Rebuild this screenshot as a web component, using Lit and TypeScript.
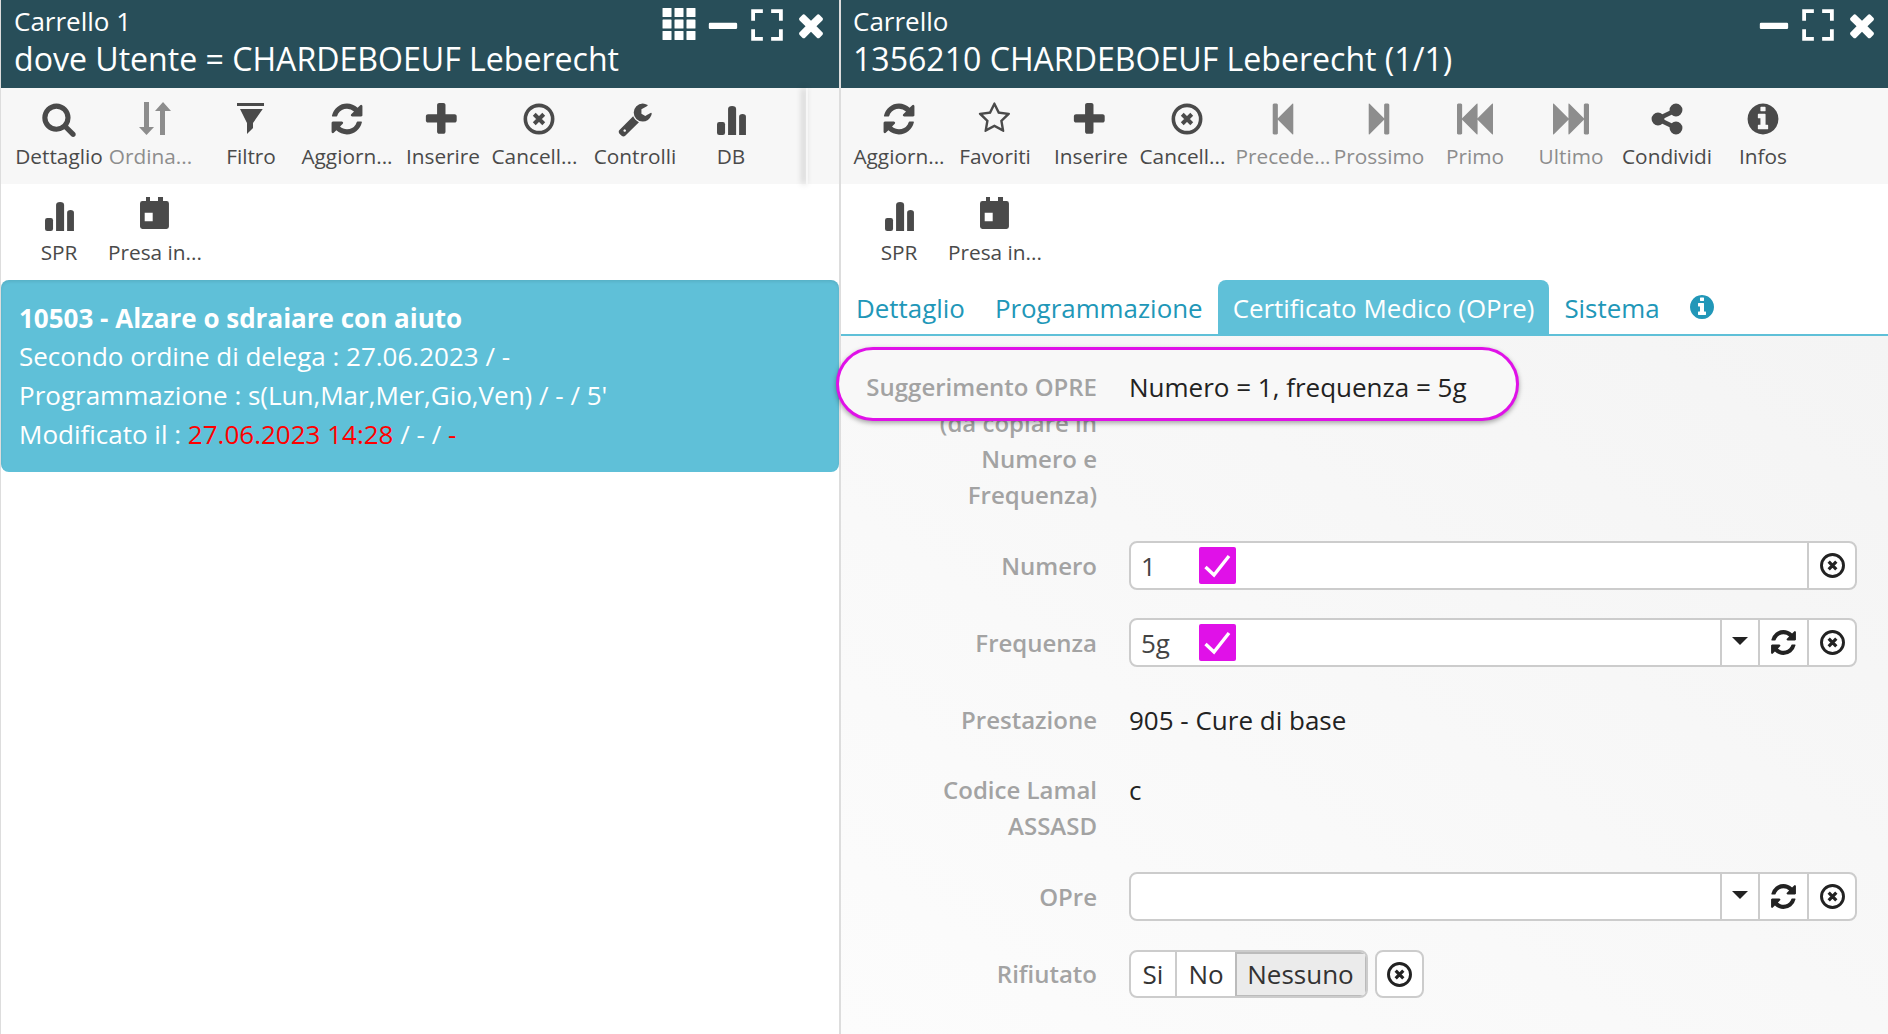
import { LitElement, html, css, svg } from "lit";
import { customElement } from "lit/decorators.js";

const P: Record<string, any> = {
  search: svg`<path d="M1216 832q0-185-131.5-316.5t-316.5-131.5-316.5 131.5-131.5 316.5 131.5 316.5 316.5 131.5 316.5-131.5 131.5-316.5zm512 832q0 52-38 90t-90 38q-54 0-90-38l-343-342q-179 124-399 124-143 0-273.5-55.5t-225-150-150-225-55.5-273.5 55.5-273.5 150-225 225-150 273.5-55.5 273.5 55.5 225 150 150 225 55.5 273.5q0 220-124 399l343 343q37 37 37 90z"/>`,
  refresh: svg`<path d="M1639 1056q0 5-1 7-64 268-268 434.5t-478 166.5q-146 0-282.5-55t-243.5-157l-129 129q-19 19-45 19t-45-19-19-45v-448q0-26 19-45t45-19h448q26 0 45 19t19 45-19 45l-137 137q71 66 161 102t187 36q134 0 250-65t186-179q11-17 53-117 8-23 30-23h192q13 0 22.5 9.5t9.5 22.5zm25-800v448q0 26-19 45t-45 19h-448q-26 0-45-19t-19-45 19-45l138-138q-148-137-349-137-134 0-250 65t-186 179q-11 17-53 117-8 23-30 23h-199q-13 0-22.5-9.5t-9.5-22.5v-7q65-268 270-434.5t480-166.5q146 0 284 55.5t245 156.5l130-129q19-19 45-19t45 19 19 45z"/>`,
  plus: svg`<g transform="translate(-166 -40) scale(1.09)"><path d="M1600 736v192q0 40-28 68t-68 28h-416v416q0 40-28 68t-68 28h-192q-40 0-68-28t-28-68v-416h-416q-40 0-68-28t-28-68v-192q0-40 28-68t68-28h416v-416q0-40 28-68t68-28h192q40 0 68 28t28 68v416h416q40 0 68 28t28 68z"/></g>`,
  times: svg`<path d="M1490 1322q0 40-28 68l-136 136q-28 28-68 28t-68-28l-294-294-294 294q-28 28-68 28t-68-28l-136-136q-28-28-28-68t28-68l294-294-294-294q-28-28-28-68t28-68l136-136q28-28 68-28t68 28l294 294 294-294q28-28 68-28t68 28l136 136q28 28 28 68t-28 68l-294 294 294 294q28 28 28 68z"/>`,
  minus: svg`<rect x="190" y="790" width="1410" height="300" rx="60"/>`,
  circleX: svg`<circle cx="896" cy="896" r="680" fill="none" stroke="currentColor" stroke-width="180"/><path d="M660 660L1132 1132M1132 660L660 1132" fill="none" stroke="currentColor" stroke-width="200"/>`,
  info: svg`<path d="M1152 1376v-160q0-14-9-23t-23-9h-96v-512q0-14-9-23t-23-9h-320q-14 0-23 9t-9 23v160q0 14 9 23t23 9h96v320h-96q-14 0-23 9t-9 23v160q0 14 9 23t23 9h448q14 0 23-9t9-23zm-128-896v-160q0-14-9-23t-23-9h-192q-14 0-23 9t-9 23v160q0 14 9 23t23 9h192q14 0 23-9t9-23zm640 416q0 209-103 385.5t-279.5 279.5-385.5 103-385.5-103-279.5-279.5-103-385.5 103-385.5 279.5-279.5 385.5-103 385.5 103 279.5 279.5 103 385.5z"/>`,
  wrench: svg`<path d="M448 1472q0-26-19-45t-45-19-45 19-19 45 19 45 45 19 45-19 19-45zm644-420l-682 682q-37 37-90 37-52 0-91-37l-106-108q-38-36-38-90 0-53 38-91l681-681q39 98 114.5 173.5t173.5 114.5zm634-435q0 39-23 106-47 134-164.5 217.5t-258.5 83.5q-185 0-316.5-131.5t-131.5-316.5 131.5-316.5 316.5-131.5q58 0 121.5 16.5t107.5 46.5q16 11 16 28t-16 28l-293 169v224l193 107q5-3 79-48.5t135.5-81 70.5-35.5q15 0 23.5 10t8.5 25z"/>`,
  share: svg`<path d="M1344 1024q133 0 226.5 93.5t93.5 226.5-93.5 226.5-226.5 93.5-226.5-93.5-93.5-226.5q0-12 2-34l-360-180q-92 86-218 86-133 0-226.5-93.5t-93.5-226.5 93.5-226.5 226.5-93.5q126 0 218 86l360-180q-2-22-2-34 0-133 93.5-226.5t226.5-93.5 226.5 93.5 93.5 226.5-93.5 226.5-226.5 93.5q-126 0-218-86l-360 180q2 22 2 34t-2 34l360 180q92-86 218-86z"/>`,
  stepB: svg`<path d="M1363 141q19-19 32-13t13 32v1472q0 26-13 32t-32-13l-710-710q-9-9-13-19v678q0 26-19 45t-45 19h-128q-26 0-45-19t-19-45v-1408q0-26 19-45t45-19h128q26 0 45 19t19 45v678q4-10 13-19z"/>`,
  stepF: svg`<path d="M429 1651q-19 19-32 13t-13-32v-1472q0-26 13-32t32 13l710 710q9 9 13 19v-678q0-26 19-45t45-19h128q26 0 45 19t19 45v1408q0 26-19 45t-45 19h-128q-26 0-45-19t-19-45v-678q-4 10-13 19z"/>`,
  fastB: svg`<path d="M1747 141q19-19 32-13t13 32v1472q0 26-13 32t-32-13l-710-710q-9-9-13-19v710q0 26-13 32t-32-13l-710-710q-9-9-13-19v678q0 26-19 45t-45 19h-128q-26 0-45-19t-19-45v-1408q0-26 19-45t45-19h128q26 0 45 19t19 45v678q4-10 13-19l710-710q19-19 32-13t13 32v710q4-10 13-19z"/>`,
  fastF: svg`<path d="M45 1651q-19 19-32 13t-13-32v-1472q0-26 13-32t32 13l710 710q9 9 13 19v-710q0-26 13-32t32 13l710 710q9 9 13 19v-678q0-26 19-45t45-19h128q26 0 45 19t19 45v1408q0 26-19 45t-45 19h-128q-26 0-45-19t-19-45v-678q-4 10-13 19l-710 710q-19 19-32 13t-13-32v-710q-4 10-13 19z"/>`,
  star: svg`<g transform="translate(30 30) scale(.933)"><path d="M1201 1004l306-297-422-62-189-382-189 382-422 62 306 297-73 421 378-199 377 199zm527-357q0 22-26 48l-363 354 86 500q1 7 1 20 0 50-41 50-19 0-40-12l-449-236-449 236q-22 12-40 12-21 0-31.5-14.5t-10.5-35.5q0-6 2-20l86-500-364-354q-25-27-25-48 0-37 56-46l502-73 225-455q19-41 49-41t49 41l225 455 502 73q56 9 56 46z"/></g>`,
  bars: svg`<rect x="200" y="1045" width="400" height="645" rx="110"/><path d="M750 1690V400q0-150 200-150t200 150V1690z"/><path d="M1300 1690V790q0-140 170-140t170 140V1690z"/>`,
  calendar: svg`<path d="M448 0h199v260h-199zM1045 0h250v260h-250z"/><path fill-rule="evenodd" d="M270 200h1200q120 0 120 120v1150q0 120-120 120h-1200q-120 0-120-120v-1150q0-120 120-120zM383 782v428h399v-428z"/>`,
  filter: svg`<path d="M199 100h1345v149h-1345zM349 398h1130l-483 698v249l-299 298v-547z"/>`,
  sort: svg`<path d="M349 50h249v1245h249l-374 398-373-398h249zM1145 1693v-1195h-249l399-448 398 448h-299v1195z"/>`,
  th: svg`<rect x="76" y="50" width="448" height="448" rx="30"/><rect x="672" y="50" width="448" height="448" rx="30"/><rect x="1268" y="50" width="448" height="448" rx="30"/><rect x="76" y="622" width="448" height="448" rx="30"/><rect x="672" y="622" width="448" height="448" rx="30"/><rect x="1268" y="622" width="448" height="448" rx="30"/><rect x="76" y="1195" width="448" height="448" rx="30"/><rect x="672" y="1195" width="448" height="448" rx="30"/><rect x="1268" y="1195" width="448" height="448" rx="30"/>`,
  expand: svg`<path d="M110 110h580v190h-390v390h-190zM1102 110h580v580h-190v-390h-390zM110 1102h190v390h390v190h-580zM1492 1102h190v580h-580v-190h390z"/>`,
};

const icon = (n: string) => html`<svg class="ic" viewBox="0 0 1792 1792" fill="currentColor">${P[n]}</svg>`;

type Tool = [string, string, boolean?, boolean?];
const tool = ([ic, label, off, sh]: Tool) => html`
  <div class="tool ${off ? "off" : ""}">${icon(ic)}<span class="${sh ? "sh" : ""}">${label}</span></div>`;

const leftTools: Tool[] = [["search", "Dettaglio"], ["sort", "Ordina...", true, true], ["filter", "Filtro"], ["refresh", "Aggiorn..."], ["plus", "Inserire"], ["circleX", "Cancell...", false, true], ["wrench", "Controlli"], ["bars", "DB"]];
const rightTools: Tool[] = [["refresh", "Aggiorn..."], ["star", "Favoriti"], ["plus", "Inserire"], ["circleX", "Cancell...", false, true], ["stepB", "Precede...", true], ["stepF", "Prossimo", true], ["fastB", "Primo", true], ["fastF", "Ultimo", true], ["share", "Condividi"], ["info", "Infos"]];
const extraTools: Tool[] = [["bars", "SPR"], ["calendar", "Presa in..."]];

const check = html`<span class="check"><svg viewBox="0 0 37 37"><path d="M6.5 20L15 28L30 9" fill="none" stroke="#fff" stroke-width="3.4" stroke-linejoin="miter"/></svg></span>`;

@customElement("app-root")
export class AppRoot extends LitElement {
  static styles = css`
    :host { display: flex; width: 1888px; height: 1034px; overflow: hidden; background: #fff; font-family: "Open Sans", sans-serif; color: #222; }
    * { box-sizing: border-box; }
    .left { width: 839px; flex: none; border-left: 1px solid #ddd; background: #fff; }
    .right { flex: 1; border-left: 2px solid #ddd; position: relative; z-index: 1; display: flex; flex-direction: column; }
    .head { height: 88px; background: #284e59; color: #fff; padding: 4px 0 0 13px; display: flex; justify-content: space-between; }
    .right .head { padding-left: 12px; }
    .t1 { font-size: 26px; line-height: 35px; }
    .t2 { font-size: 32.1px; line-height: 40px; }
    .wins { display: flex; align-items: flex-start; padding-right: 10px; padding-top: 3px; gap: 8px; }
    .right .wins { padding-right: 8px; }
    .wins svg { width: 36px; height: 36px; display: block; }
    .bar { display: flex; height: 96px; padding-left: 10px; background: #f7f7f7; }
    .bar.main { position: relative; }
    .left .bar.main::after { content: ""; position: absolute; left: 805px; top: 0; bottom: 0; width: 2px; box-shadow: -3px 0 6px rgba(0,0,0,.35); }
    .bar.sub { background: #fff; }
    .tool { width: 96px; flex: none; display: flex; flex-direction: column; align-items: center; padding-top: 13px; color: #4a4a4a; font-size: 20.8px; line-height: 28px; white-space: nowrap; }
    .tool .ic { width: 36px; height: 36px; display: block; margin-bottom: 5px; }
    .tool .sh { margin-right: 9px; }
    .tool.off { color: #8d8d8d; }
    .card { height: 192px; background: #5fc0d8; border-radius: 8px; padding: 19px 18px; color: #fff; font-size: 26px; line-height: 39px; box-shadow: inset 0 2px 3px rgba(0,0,0,.08); }
    .card b { font-weight: 700; display: block; margin-bottom: -1px; }
    .red { color: #f00; }
    .tabs { height: 56px; display: flex; align-items: stretch; border-bottom: 2px solid #5fc0d8; background: #fff; font-size: 25.9px; color: #2197b8; flex: none; }
    .tab { padding: 2px 15px 0; display: flex; align-items: center; }
    .tab.on { background: #5fc0d8; color: #fff; border-radius: 8px 8px 0 0; }
    .tab .ic { width: 28px; height: 28px; display: block; margin: -3px 0 0 -2px; }
    .form { flex: 1; background: linear-gradient(to top right, #fcfcfc, #f4f4f4); padding: 33px 31px 0 10px; display: flex; flex-direction: column; gap: 28px; position: relative; font-size: 24px; line-height: 36px; }
    .row { display: grid; grid-template-columns: 246px 1fr; column-gap: 32px; align-items: center; }
    .row.static { align-items: start; }
    .row.pad { padding: 7px 0 6px; }
    .row.tight { margin-bottom: 1px; }
    .lab { text-align: right; color: #a3a3a3; font-weight: 600; font-size: 24px; }
    .val { font-size: 26px; color: #222; }
    .callout { position: absolute; left: -5px; top: 11px; width: 683px; height: 74px; border: 3px solid #e011e8; border-radius: 37px; background: #f8f8f8; box-shadow: 0 2px 5px rgba(0,0,0,.35); display: grid; grid-template-columns: 258px 1fr; column-gap: 32px; align-items: center; padding-top: 6px; z-index: 2; }
    .input { height: 49px; border: 2px solid #ccc; border-radius: 8px; background: #fff; display: flex; align-items: stretch; font-size: 26px; color: #444; }
    .input .text { flex: 1; display: flex; align-items: center; padding-left: 10px; }
    .input .v { width: 58px; }
    .check { width: 37px; height: 37px; background: #e011e8; border-radius: 2px; display: block; }
    .check svg { display: block; width: 37px; height: 37px; }
    .btn { border-left: 2px solid #ccc; display: flex; align-items: center; justify-content: center; color: #222; width: 48px; }
    .btn.mid { width: 49px; }
    .btn.caret { width: 38px; }
    .btn .ic { width: 29px; height: 29px; display: block; }
    .caret i { width: 0; height: 0; border-left: 8px solid transparent; border-right: 8px solid transparent; border-top: 8px solid #222; margin-top: -4px; }
    .seg { display: flex; align-items: stretch; height: 48px; gap: 7px; }
    .group { display: flex; border: 2px solid #ccc; border-radius: 8px; background: #fff; overflow: hidden; font-size: 26px; color: #333; }
    .group span { display: flex; align-items: center; justify-content: center; }
    .si { width: 44px; }
    .no { width: 60px; border-left: 2px solid #ccc; }
    .ne { width: 131px; background: #ebebeb; box-shadow: inset 2px 2px 0 #bbb, inset -1px -1px 0 #bbb; }
    .xbtn { width: 49px; border: 2px solid #ccc; border-radius: 8px; background: #fff; display: flex; align-items: center; justify-content: center; color: #222; }
    .xbtn .ic { width: 29px; height: 29px; display: block; }
  `;

  render() {
    return html`
      <section class="left">
        <div class="head">
          <div><div class="t1">Carrello 1</div><div class="t2">dove Utente = CHARDEBOEUF Leberecht</div></div>
          <div class="wins">${icon("th")}${icon("minus")}${icon("expand")}${icon("times")}</div>
        </div>
        <div class="bar main">${leftTools.map(tool)}</div>
        <div class="bar sub">${extraTools.map(tool)}</div>
        <div class="card">
          <b>10503 - Alzare o sdraiare con aiuto</b>
          Secondo ordine di delega : 27.06.2023 / -<br />
          Programmazione : s(Lun,Mar,Mer,Gio,Ven) / - / 5'<br />
          Modificato il : <span class="red">27.06.2023 14:28</span> / - / <span class="red">-</span>
        </div>
      </section>
      <section class="right">
        <div class="head">
          <div><div class="t1">Carrello</div><div class="t2">1356210 CHARDEBOEUF Leberecht (1/1)</div></div>
          <div class="wins">${icon("minus")}${icon("expand")}${icon("times")}</div>
        </div>
        <div class="bar main">${rightTools.map(tool)}</div>
        <div class="bar sub">${extraTools.map(tool)}</div>
        <div class="tabs">
          <div class="tab">Dettaglio</div>
          <div class="tab">Programmazione</div>
          <div class="tab on">Certificato Medico (OPre)</div>
          <div class="tab">Sistema</div>
          <div class="tab">${icon("info")}</div>
        </div>
        <div class="form">
          <div class="callout">
            <div class="lab">Suggerimento OPRE</div>
            <div class="val">Numero = 1, frequenza = 5g</div>
          </div>
          <div class="row static">
            <div class="lab">&nbsp;<br />(da copiare in<br />Numero e<br />Frequenza)</div>
            <div></div>
          </div>
          <div class="row">
            <div class="lab">Numero</div>
            <div class="input"><div class="text"><span class="v">1</span>${check}</div><div class="btn">${icon("circleX")}</div></div>
          </div>
          <div class="row">
            <div class="lab">Frequenza</div>
            <div class="input"><div class="text"><span class="v">5g</span>${check}</div><div class="btn caret"><i></i></div><div class="btn mid">${icon("refresh")}</div><div class="btn">${icon("circleX")}</div></div>
          </div>
          <div class="row static pad">
            <div class="lab">Prestazione</div>
            <div class="val">905 - Cure di base</div>
          </div>
          <div class="row static">
            <div class="lab">Codice Lamal<br />ASSASD</div>
            <div class="val">c</div>
          </div>
          <div class="row tight">
            <div class="lab">OPre</div>
            <div class="input"><div class="text"></div><div class="btn caret"><i></i></div><div class="btn mid">${icon("refresh")}</div><div class="btn">${icon("circleX")}</div></div>
          </div>
          <div class="row">
            <div class="lab">Rifiutato</div>
            <div class="seg">
              <div class="group"><span class="si">Si</span><span class="no">No</span><span class="ne">Nessuno</span></div>
              <div class="xbtn">${icon("circleX")}</div>
            </div>
          </div>
        </div>
      </section>
    `;
  }
}
